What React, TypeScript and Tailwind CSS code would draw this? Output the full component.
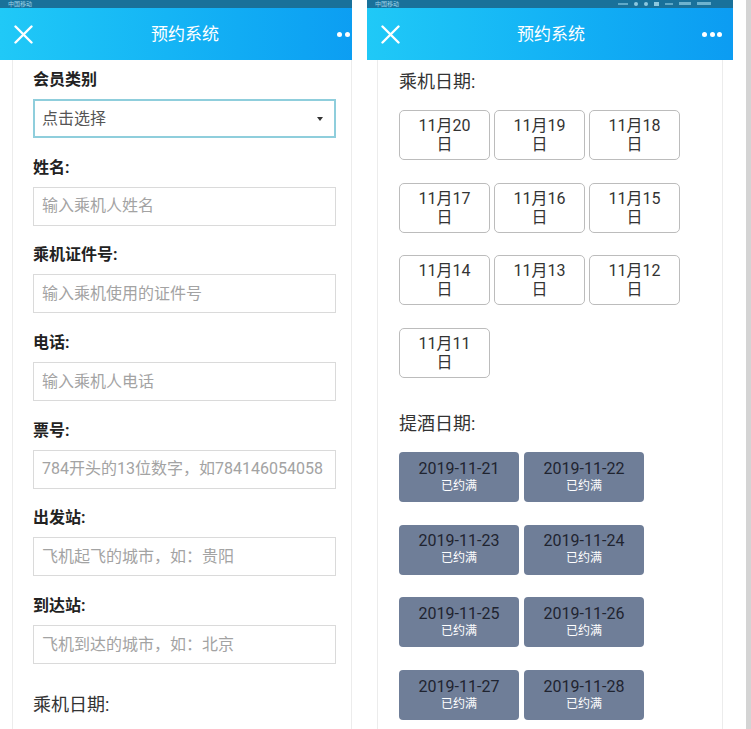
import React from "react";

const FONT = { fontFamily: 'Roboto, "Noto Sans CJK SC", "Noto Sans", sans-serif' };

function StatusBar({ wide }: { wide?: boolean }) {
  return (
    <div className="h-[8px] bg-[#19719a] flex items-start px-[8px] overflow-hidden">
      <span className="text-[6px] leading-[7px] text-[#9fd3e8]">中国移动</span>
      {wide && (
        <div className="ml-auto mr-[14px] flex items-center gap-[6px] h-[7px]">
          <span className="w-[10px] h-[2px] bg-[#5fa9c8]" />
          <span className="w-[4px] h-[4px] rounded-full bg-[#8cc7de]" />
          <span className="w-[4px] h-[4px] rounded-full bg-[#8cc7de]" />
          <span className="w-[5px] h-[4px] bg-[#8cc7de]" />
          <span className="w-[8px] h-[2px] bg-[#5fa9c8]" />
          <span className="w-[12px] h-[3px] bg-[#6db3cf]" />
          <span className="w-[14px] h-[3px] bg-[#6db3cf]" />
        </div>
      )}
    </div>
  );
}

function Header({ width }: { width: number }) {
  return (
    <div
      className="h-[52px] flex items-center bg-gradient-to-r from-[#20c9f7] to-[#0c9cf2] relative shrink-0"
      style={{ width }}
    >
      <svg className="ml-[14px] shrink-0" width="19" height="19" viewBox="0 0 19 19">
        <path d="M1.5 1.5 L17.5 17.5 M17.5 1.5 L1.5 17.5" stroke="white" strokeWidth="2.4" strokeLinecap="round" />
      </svg>
      <div className="flex-1 text-center text-white text-[17px] leading-[24px]">预约系统</div>
      <div className="mr-[11px] flex items-center gap-[2.5px]">
        <span className="w-[5px] h-[5px] rounded-full bg-white" />
        <span className="w-[5px] h-[5px] rounded-full bg-white" />
        <span className="w-[5px] h-[5px] rounded-full bg-white" />
      </div>
    </div>
  );
}

function Field({ label, placeholder }: { label: string; placeholder: string }) {
  return (
    <div className="mb-[17.7px]">
      <div className="h-[24px] leading-[24px] text-[16px] font-bold text-[#222] mb-[7px]">{label}</div>
      <div className="h-[39px] w-[303px] border-[1.5px] border-[#dadada] flex items-center pl-[8px] text-[16px] text-[#a3a3a3] whitespace-nowrap overflow-hidden">
        {placeholder}
      </div>
    </div>
  );
}

function LeftPanel() {
  return (
    <div className="w-[352px] h-[729px] overflow-hidden shrink-0 flex flex-col">
      <div className="w-[368px]">
        <StatusBar />
        <Header width={368} />
      </div>
      <div className="ml-[12px] w-[340px] flex-1 border-l border-r border-[#ececec] pl-[20px] pt-[8px]">
        <div className="mb-[17.7px]">
          <div className="h-[24px] leading-[24px] text-[16px] font-bold text-[#222] mb-[7px]">会员类别</div>
          <div className="h-[39px] w-[303px] border-2 border-[#8fcedc] flex items-center pl-[7px] pr-[11px] text-[16px] text-[#555]">
            <span className="flex-1">点击选择</span>
            <svg width="6" height="4" viewBox="0 0 6 4">
              <path d="M0 0 L6 0 L3 4 Z" fill="#333" />
            </svg>
          </div>
        </div>
        <Field label="姓名:" placeholder="输入乘机人姓名" />
        <Field label="乘机证件号:" placeholder="输入乘机使用的证件号" />
        <Field label="电话:" placeholder="输入乘机人电话" />
        <Field label="票号:" placeholder="784开头的13位数字，如784146054058" />
        <Field label="出发站:" placeholder="飞机起飞的城市，如：贵阳" />
        <Field label="到达站:" placeholder="飞机到达的城市，如：北京" />
        <div className="pt-[11px] h-[24px] leading-[24px] text-[18px] text-[#333]">乘机日期:</div>
      </div>
    </div>
  );
}

const flightDates = ["20", "19", "18", "17", "16", "15", "14", "13", "12", "11"];
const wineDates = ["21", "22", "23", "24", "25", "26", "27", "28"];

function RightPanel() {
  return (
    <div className="w-[366px] h-[729px] overflow-hidden shrink-0 flex flex-col">
      <StatusBar wide />
      <Header width={366} />
      <div className="mx-[10px] flex-1 border-l border-r border-[#ececec] pl-[21px] pt-[10px]">
        <div className="h-[24px] leading-[24px] text-[18px] text-[#333] mb-[16px]">乘机日期:</div>
        <div className="grid grid-cols-[91px_91px_91px] gap-x-[4px] gap-y-[22.7px]">
          {flightDates.map((d) => (
            <div
              key={d}
              className="h-[50px] border border-[#bcbcbc] rounded-[5px] flex flex-col items-center justify-center text-[16px] leading-[19px] text-[#333]"
            >
              <span>11月{d}</span>
              <span>日</span>
            </div>
          ))}
        </div>
        <div className="mt-[34px] h-[24px] leading-[24px] text-[18px] text-[#333] mb-[16px]">提酒日期:</div>
        <div className="grid grid-cols-[120px_120px] gap-x-[5px] gap-y-[22.7px]">
          {wineDates.map((d) => (
            <div
              key={d}
              className="h-[50px] bg-[#6f7e98] rounded-[4px] flex flex-col items-center justify-center"
            >
              <span className="text-[16px] leading-[18px] text-[#1f2430]">2019-11-{d}</span>
              <span className="text-[12px] leading-[17px] text-white">已约满</span>
            </div>
          ))}
        </div>
      </div>
    </div>
  );
}

export default function App() {
  return (
    <div className="w-[751px] h-[729px] overflow-hidden bg-white flex" style={FONT}>
      <LeftPanel />
      <div className="w-[15px] shrink-0" />
      <RightPanel />
      <div className="w-[13px] shrink-0" />
      <div className="w-[5px] shrink-0 bg-[#d4d4d4]" />
    </div>
  );
}
